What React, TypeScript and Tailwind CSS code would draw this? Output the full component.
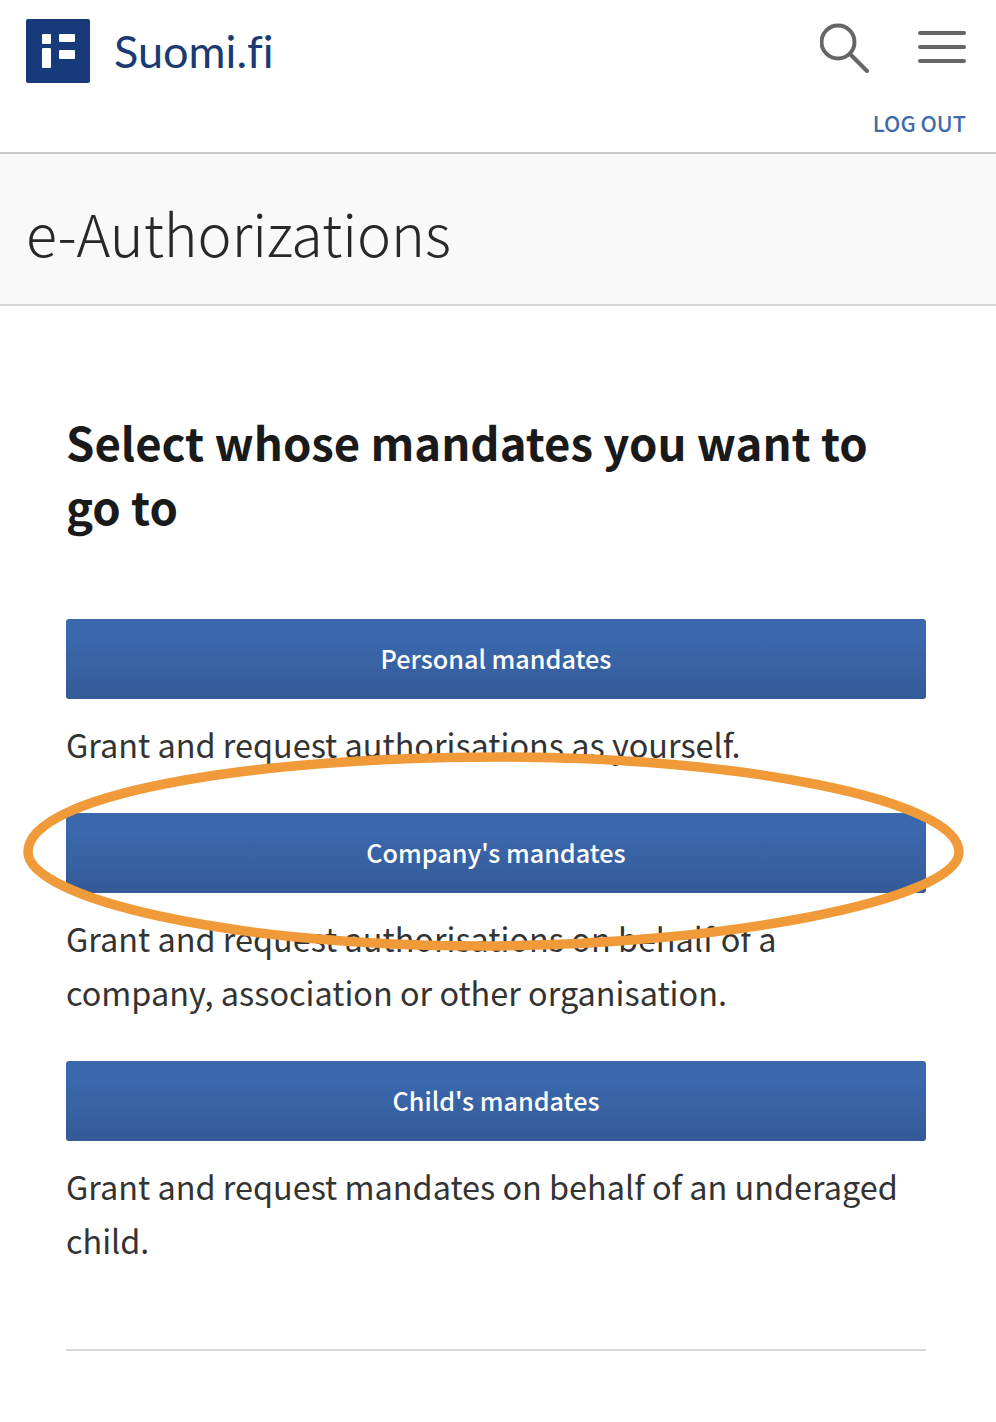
const sans = "font-['Noto_Sans_CJK_SC','Noto_Sans',sans-serif]";

function MandateButton({ label }: { label: string }) {
  return (
    <button className="block w-full h-20 rounded-[3px] bg-gradient-to-b from-[#3a68ad] from-25% to-[#345a97] text-white text-[25.2px] font-medium">
      {label}
    </button>
  );
}

function App() {
  return (
    <div className={`relative w-[996px] h-[1422px] overflow-hidden bg-white ${sans}`}>
      {/* header */}
      <header className="h-[154px] border-b-2 border-[#cacaca] flex justify-between pl-[26px] pr-[30px]">
        <div className="flex items-start pt-[19px] gap-[24px]">
          <svg width="64" height="64" viewBox="0 0 64 64">
            <rect width="64" height="64" rx="2" fill="#163a7a" />
            <rect x="16" y="15" width="9" height="10" rx="1" fill="#fff" />
            <rect x="16" y="29" width="9" height="20" rx="1" fill="#fff" />
            <rect x="33" y="15" width="16" height="8" rx="1" fill="#fff" />
            <rect x="33" y="31" width="16" height="9" rx="1" fill="#fff" />
          </svg>
          <span className="font-['Lato',sans-serif] [font-variant-ligatures:none] text-[45px] leading-[64px] text-[#1a3a72]">Suomi.fi</span>
        </div>
        <div className="flex flex-col items-end pt-[23px]">
          <div className="flex items-start gap-[48px]">
            <svg width="50" height="50" viewBox="0 0 50 50" fill="none" stroke="#666" strokeWidth="4" strokeLinecap="round">
              <circle cx="18" cy="19" r="16.5" />
              <path d="M30 31 L47 48" />
            </svg>
            <svg width="48" height="36" viewBox="0 0 48 36" className="mt-[8px]" fill="none" stroke="#666" strokeWidth="4" strokeLinecap="round">
              <path d="M2 2 H46" />
              <path d="M2 16 H46" />
              <path d="M2 30 H46" />
            </svg>
          </div>
          <a className="mt-[34px] text-[21.7px] leading-[32px] font-medium text-[#3f6ba6]">LOG OUT</a>
        </div>
      </header>

      {/* title band */}
      <div className="h-[152px] bg-[#f9f9f9] border-b-2 border-[#d8d8d8] pl-[26px] pt-[42px]">
        <h1 className="text-[57.4px] leading-[72px] font-light text-[#282828]">e-Authorizations</h1>
      </div>

      <main className="pl-[66px] pr-[70px] pt-[103px]">
        <h2 className="text-[45.5px] leading-[64px] font-semibold text-[#1a1a1a]">
          Select whose mandates you want to go to
        </h2>

        <div className="mt-[82px]">
          <MandateButton label="Personal mandates" />
          <p className="mt-[18px] text-[32.4px] leading-[54px] text-[#333]">Grant and request authorisations as yourself.</p>
        </div>
        <div className="mt-[42px]">
          <MandateButton label="Company's mandates" />
          <p className="mt-[18px] text-[32.4px] leading-[54px] text-[#333]">
            Grant and request authorisations on behalf of a<br />company, association or other organisation.
          </p>
        </div>
        <div className="mt-[42px]">
          <MandateButton label="Child's mandates" />
          <p className="mt-[18px] text-[32.4px] leading-[54px] text-[#333]">
            Grant and request mandates on behalf of an underaged child.
          </p>
        </div>

        <hr className="mt-[82px] border-t-2 border-[#d8d8d8]" />
      </main>

      {/* orange annotation */}
      <svg className="absolute left-0 top-0 pointer-events-none" width="996" height="1422" fill="none">
        <path
          d="M28 852 C28 796 240 757 500 757 C740 757 959 800 959 852 C959 900 720 946 480 946 C230 946 28 898 28 852 Z"
          stroke="#f09a3a"
          strokeWidth="9.5"
        />
      </svg>
    </div>
  );
}

export default App;
